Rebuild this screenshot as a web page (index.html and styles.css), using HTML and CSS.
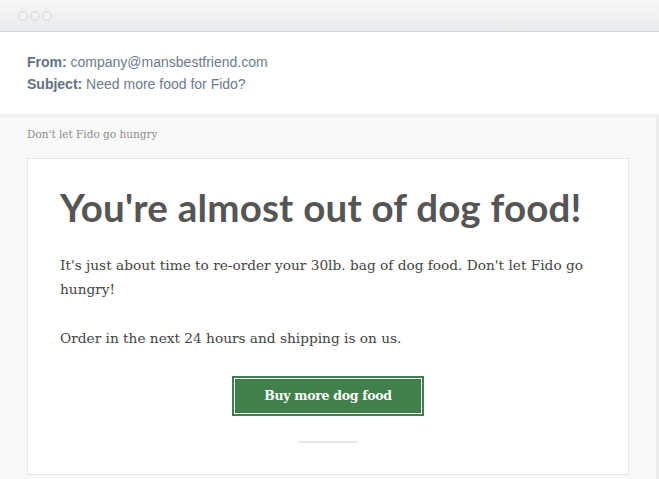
FILE: index.html
```html
<!DOCTYPE html>
<html>
<head>
<meta charset="utf-8">
<link rel="stylesheet" href="styles.css">
</head>
<body>
<div class="window">
  <div class="titlebar">
    <span class="dot"></span><span class="dot"></span><span class="dot"></span>
  </div>
  <div class="meta">
    <div class="meta-row"><b>From:</b> company@mansbestfriend.com</div>
    <div class="meta-row"><b>Subject:</b> Need more food for Fido?</div>
  </div>
  <div class="body">
    <div class="preheader">Don't let Fido go hungry</div>
    <div class="card">
      <h1 class="title">You're almost out of dog food!</h1>
      <p class="text">It's just about time to re-order your 30lb. bag of dog food. Don't let Fido go hungry!</p>
      <p class="text">Order in the next 24 hours and shipping is on us.</p>
      <div class="cta"><a class="button">Buy more dog food</a></div>
      <div class="divider"></div>
    </div>
  </div>
</div>
</body>
</html>
```
FILE: styles.css
```css
html, body { margin: 0; padding: 0; }
body { width: 659px; height: 479px; overflow: hidden; background: #fff; }
.window { display: flex; flex-direction: column; height: 479px; }
.titlebar {
  height: 31px; flex: none;
  background: linear-gradient(#f7f7f7, #e9eaeb);
  border-bottom: 1px solid #cfd5da;
  display: flex; align-items: center; gap: 2px; padding-left: 18px;
}
.dot { width: 8px; height: 8px; border: 1px solid #d3d6d9; border-radius: 50%; }
.meta {
  flex: none; height: 85px; padding: 19px 0 0 27px; box-sizing: border-box;
  font-family: "Liberation Sans", Arial, sans-serif; font-size: 14px; color: #6b7b8f;
  border-bottom: 3px solid #f0f0f0;
}
.meta-row { line-height: 22px; }
.meta-row b { color: #617186; }
.body {
  flex: 1; min-height: 0; background: #f9f9f9; padding: 0 27px; border-right: 3px solid #ececec;
}
.preheader {
  font-family: "DejaVu Serif", Georgia, serif; font-size: 10.5px; color: #8c8c8c;
  padding-top: 11px; height: 41px; box-sizing: border-box;
}
.card {
  width: 602px; box-sizing: border-box; background: #fff; border: 1px solid #e5e5e5;
  padding: 24px 32px 31px 32px;
}
.title {
  margin: 0; font-family: Lato, "Open Sans", sans-serif; font-weight: 700;
  font-size: 38.5px; line-height: 48px; color: #555; letter-spacing: 0.2px;
}
.text {
  margin: 22px 0 0; font-family: "DejaVu Serif", Georgia, serif; font-size: 13.7px;
  line-height: 24px; color: #444;
}
.text + .text { margin-top: 25px; }
.cta { display: flex; justify-content: center; margin-top: 26px; }
.button {
  display: block; width: 192px; height: 40px; box-sizing: border-box;
  background: #417f4b; border: 2px solid #417f4b; box-shadow: inset 0 0 0 1px #fff;
  color: #fff; font-family: "DejaVu Serif", Georgia, serif; font-weight: 700; font-size: 12.5px;
  text-align: center; line-height: 36px; letter-spacing: -0.3px;
}
.divider { width: 60px; height: 2px; background: #e6e6e6; margin: 25px auto 0; }
```
